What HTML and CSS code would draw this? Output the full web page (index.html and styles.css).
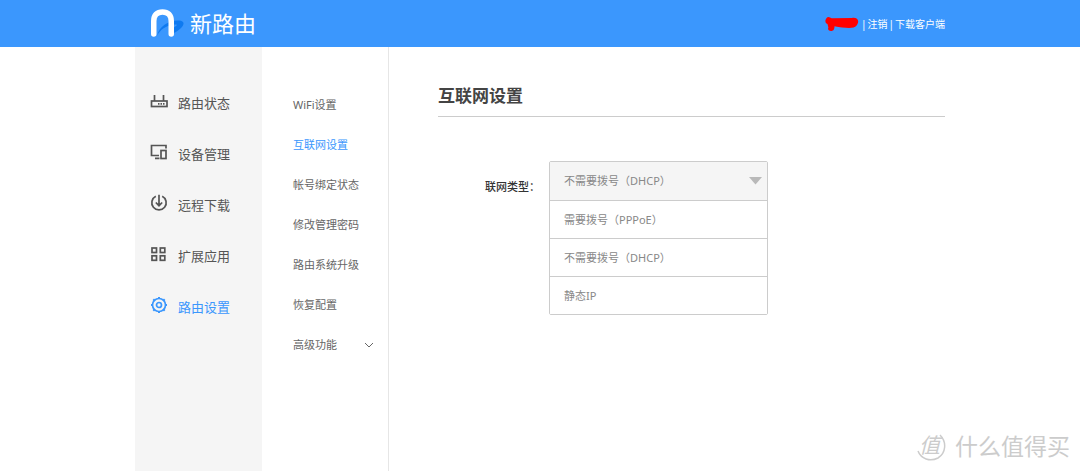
FILE: index.html
```html
<!DOCTYPE html>
<html lang="zh-CN">
<head>
<meta charset="utf-8">
<title>新路由</title>
<link rel="stylesheet" href="styles.css">
</head>
<body>
<header class="header">
  <div class="wrap header-row">
    <a class="logo" href="#">
      <svg width="34" height="28" viewBox="0 0 34 28" fill="none" aria-hidden="true">
        <path d="M6 27C8 17 18 11 28 11.500C36 12 33 19 22 24.500L20 20C26 17 28 15 23 15.500C14 17 9 21 6 27Z" fill="#0f7af0"/>
        <path d="M2.750 25V12C2.750 6 6 3 11.500 3S20.250 6 20.250 12V25" stroke="#fff" stroke-width="5.500" stroke-linecap="round"/>
      </svg>
      <span>新路由</span>
    </a>
    <nav class="user">
      <svg width="37" height="14" viewBox="0 0 38 16" aria-hidden="true">
        <path d="M2 1C4-1 6 1 8 1.500L31 1C38 0 40 5 36 10C33 14 22 12.500 11 10.500C11 15 9 16 7 16C4 16 3 14 4 12L3 8C0 7 0 3 2 1Z" fill="#f00"/>
      </svg>
      <span>|</span><a href="#">注销</a><span>|</span><a href="#">下载客户端</a>
    </nav>
  </div>
</header>
<div class="wrap body">
  <nav class="side">
    <a href="#"><svg width="18" height="16" viewBox="0 0 18 16" fill="none" stroke="currentColor" stroke-width="1.700" aria-hidden="true"><rect x="1.500" y="8" width="15.500" height="5.500"/><path d="M4.500 8V2M13.500 8V2"/><path d="M8 10.800h1.500M10.500 10.800H12M13 10.800h1.500"/></svg>路由状态</a>
    <a href="#"><svg width="18" height="16" viewBox="0 0 18 16" fill="none" stroke="currentColor" stroke-width="1.700" aria-hidden="true"><path d="M16 4.500V1.500H1.500v10H9M5 14.300h4.500"/><rect x="11" y="6.500" width="5" height="8"/></svg>设备管理</a>
    <a href="#"><svg width="18" height="18" viewBox="0 0 18 18" fill="none" stroke="currentColor" stroke-width="1.700" aria-hidden="true"><path d="M5.800 2.300a7.200 7.200 0 1 0 6.400 0M9 .8v10.500M5.800 8.500L9 11.700l3.200-3.200"/></svg>远程下载</a>
    <a href="#"><svg width="18" height="16" viewBox="0 0 18 16" fill="none" stroke="currentColor" stroke-width="1.700" aria-hidden="true"><rect x="2" y="2" width="4.500" height="4.500"/><rect x="10.300" y="2" width="4.500" height="4.500"/><rect x="2" y="9.800" width="4.500" height="4.500"/><rect x="10.300" y="9.800" width="4.500" height="4.500"/></svg>扩展应用</a>
    <a class="active" href="#"><svg width="18" height="18" viewBox="0 0 18 18" fill="none" stroke="currentColor" stroke-width="1.700" aria-hidden="true"><circle cx="9" cy="9" r="6.500"/><path stroke-width="2" d="M9 1v2M9 15v2M1 9h2M15 9h2M3.300 3.300l1.400 1.400M13.300 13.300l1.400 1.400M3.300 14.700l1.400-1.400M13.300 4.700l1.400-1.400"/><circle cx="9" cy="9" r="2.500"/></svg>路由设置</a>
  </nav>
  <nav class="sub">
    <a href="#">WiFi设置</a>
    <a class="active" href="#">互联网设置</a>
    <a href="#">帐号绑定状态</a>
    <a href="#">修改管理密码</a>
    <a href="#">路由系统升级</a>
    <a href="#">恢复配置</a>
    <a href="#">高级功能<svg width="10" height="6" viewBox="0 0 10 6" fill="none" stroke="currentColor" aria-hidden="true"><path d="M1 1l4 4 4-4"/></svg></a>
  </nav>
  <main class="main">
    <h1>互联网设置</h1>
    <div class="field">
      <label for="type">联网类型：</label>
      <div class="dropdown">
        <div class="picker">
          <select id="type">
            <option>需要拨号（PPPoE）</option>
            <option selected>不需要拨号（DHCP）</option>
            <option>静态IP</option>
          </select>
          <svg class="arrow" width="13" height="8" viewBox="0 0 13 8" aria-hidden="true"><path d="M0 0h13L6.500 7.500Z" fill="#b9b9b9"/></svg>
        </div>
        <ul class="options">
          <li><button type="button">需要拨号（PPPoE）</button></li>
          <li><button type="button">不需要拨号（DHCP）</button></li>
          <li><button type="button">静态IP</button></li>
        </ul>
      </div>
    </div>
  </main>
</div>
<div class="watermark">
  <span class="seal"><svg class="ring" viewBox="0 0 30 30" fill="none" stroke="currentColor" stroke-width="1.500" aria-hidden="true"><path d="M24 4C31 11 30 22 22 27C14 31 5 28 2 20"/></svg><span class="seal-text">值</span></span>
  什么值得买
</div>
</body>
</html>
```
FILE: styles.css
```css
* { box-sizing: border-box; }
body {
  margin: 0;
  min-height: 100vh;
  display: flex;
  flex-direction: column;
  background: #fff;
  color: #555;
  font: 11px/16px "Noto Sans", "Noto Sans CJK SC", sans-serif;
}
a { color: inherit; text-decoration: none; }
.wrap { width: 75%; margin: 0 auto; }
.header { background: #3b97fd; color: #fff; }
.header-row { display: flex; justify-content: space-between; align-items: center; height: 47px; }
.logo { display: flex; align-items: center; gap: 5px; padding: 0 0 2px 16px; font-size: 22px; line-height: 28px; }
.user { display: flex; align-items: center; gap: 1px; font-size: 10px; }
.body { display: flex; flex: 1; }
.side { width: 127px; padding: 30px 0 0 15px; background: #f5f5f5; }
.side a { display: flex; align-items: center; gap: 10px; height: 51px; font-size: 13px; }
.side svg { margin-bottom: 3px; }
.sub { width: 127px; padding: 38px 14px 0 31px; border-right: 1px solid #e6e6e6; color: #666; }
.sub a { display: flex; align-items: center; justify-content: space-between; height: 40px; }
.side .active, .sub .active { color: #3b97fd; }
.main { flex: 1; padding: 36px 0 0 49px; }
h1 { margin: 0; padding-bottom: 8px; border-bottom: 1px solid #ccc; color: #444; font-size: 17px; line-height: 25px; font-weight: 700; }
.field { display: flex; gap: 8px; padding: 44px 0 0 47px; }
.field label { width: 56px; padding-top: 18px; color: #333; font-weight: 500; white-space: nowrap; }
.dropdown { width: 219px; border: 1px solid #ccc; border-radius: 2px; color: #888; }
.picker { display: grid; align-items: center; background: #f5f5f5; }
.picker select {
  grid-area: 1 / 1;
  width: 100%;
  height: 38px;
  padding: 0 14px;
  border: 0;
  background: transparent;
  color: inherit;
  font: inherit;
  font-size: 11px;
  appearance: none;
}
.arrow { grid-area: 1 / 1; justify-self: end; margin-right: 5px; pointer-events: none; }
.options { margin: 0; padding: 0; list-style: none; }
.options li { border-top: 1px solid #ccc; }
.options button {
  display: block;
  width: 100%;
  height: 37px;
  padding: 0 14px;
  border: 0;
  background: #fff;
  color: inherit;
  font: inherit;
  text-align: left;
}
.watermark {
  position: absolute;
  right: 10px;
  bottom: 9px;
  display: flex;
  align-items: center;
  gap: 9px;
  color: #ccc;
  font-size: 23px;
  line-height: 32px;
}
.seal { display: grid; width: 30px; height: 30px; font-size: 21px; line-height: 28px; font-style: italic; }
.ring, .seal-text { grid-area: 1 / 1; }
.seal-text { padding-left: 3px; }
```
